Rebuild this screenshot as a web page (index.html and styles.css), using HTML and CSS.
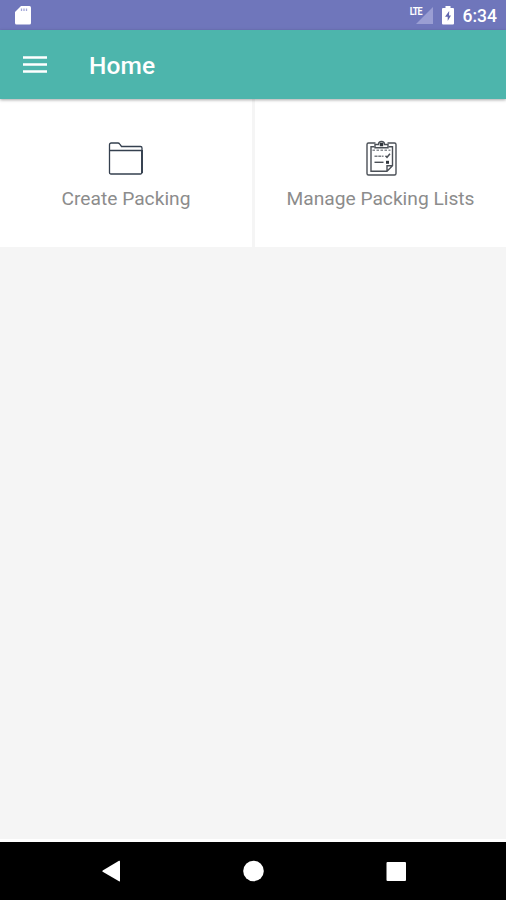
FILE: index.html
```html
<!DOCTYPE html>
<html lang="en">
<head>
<meta charset="utf-8">
<title>Home</title>
<link rel="stylesheet" href="styles.css">
</head>
<body>
<div class="screen">
  <div class="status">
    <svg class="sd" width="16" height="19" viewBox="0 0 16 19"><path d="M6 0h8.500q1.500 0 1.500 1.500v15.500q0 1.500-1.500 1.500h-13q-1.500 0-1.500-1.500v-11z" fill="#fff"/><path d="M6.500 2.500v2.500M9 2.500v2.500M11.500 2.500v2.500" stroke="#a3a7d7" stroke-width="1.300"/></svg>
    <div class="indicators">
      <span class="lte">LTE</span>
      <svg class="signal" width="17" height="17" viewBox="0 0 17 17"><path d="M17 0v17H0z" fill="#9a9ed3"/></svg>
      <svg class="battery" width="12" height="19" viewBox="0 0 12 19"><path d="M3.500 0h5v2H11q1 0 1 1v14.500q0 1-1 1H1q-1 0-1-1V3q0-1 1-1h2.500z" fill="#fff"/><path d="M7.200 5L3 10.700h2.700v4.300L9 9.500H7z" fill="#6268b0"/></svg>
      <span class="clock">6:34</span>
    </div>
  </div>
  <header class="bar">
    <svg class="menu" width="24" height="18" viewBox="0 0 24 18"><path d="M0 1.500h24M0 8.500h24M0 15.500h24" stroke="#fff" stroke-width="2.600"/></svg>
    <h1 class="title">Home</h1>
  </header>
  <main class="content">
    <div class="grid">
      <div class="tile">
        <svg class="icon" width="36" height="38" viewBox="0 0 36 38" fill="none" stroke="#35404f" stroke-width="1.300"><path d="M1.500 32.500V4.800q0-1.800 1.800-1.800h6.500q1.200 0 2 1.200L13.500 6.500h19q1.500 0 1.500 1.500v24.500q0 1.500-1.500 1.500H3q-1.500 0-1.500-1.500zM1.500 10.500h32.500"/><path d="M34 10v23" stroke-width="1.900"/></svg>
        <span class="label">Create Packing</span>
      </div>
      <div class="tile">
        <svg class="icon" width="36" height="38" viewBox="0 0 36 38" fill="none" stroke="#4b5057" stroke-width="1.400"><g transform="translate(.5 .8)"><path d="M12 2.200H5q-1.500 0-1.500 1.500v29q0 1.500 1.500 1.500h26q1.500 0 1.500-1.500v-29q0-1.500-1.500-1.500h-7"/><path d="M11 6H7.500v24.500h16l5.500-5.500V6h-4M23.500 30.500V25H29"/><path d="M11.500 7V3.700H15q0-3 3-3t3 3h3.500V7z"/><path d="M16.300 2h3.400v3.500h-3.400z" fill="#30353c" stroke="none"/><path d="M9 9.500h18" stroke-dasharray="2.500 1.500" stroke="#8a8e93"/><path d="M11 15.500h9" stroke-dasharray="3 .8" stroke="#777b80"/><path d="M11 21.500h9"/><path d="M22 15l1.500 1.500 3-3.500" stroke-width="1.500"/><path d="M22.500 20h3v3h-3z" fill="#30353c" stroke="none"/></g></svg>
        <span class="label">Manage Packing Lists</span>
      </div>
    </div>
  </main>
  <nav class="nav">
    <svg width="506" height="58" viewBox="0 0 506 58" fill="#fff"><path d="M119 18.800q1-.5 1 .5v19.500q0 1-1 .5l-16.300-9.500q-.8-.7 0-1.400z"/><circle cx="253.500" cy="29" r="10.300"/><rect x="386.500" y="20" width="19.500" height="19" rx="1"/></svg>
  </nav>
</div>
</body>
</html>
```
FILE: styles.css
```css
body {
  margin: 0;
  font-family: Roboto, sans-serif;
}

.screen {
  display: flex;
  flex-direction: column;
  width: 506px;
  height: 900px;
  overflow: hidden;
  background: #f5f5f5;
}

.status {
  display: flex;
  flex: none;
  justify-content: space-between;
  box-sizing: border-box;
  height: 30px;
  padding: 6px 9px 0 15px;
  background: #6f76bb;
  color: #fff;
}

.indicators {
  display: flex;
  align-items: flex-start;
}

.lte {
  margin-right: -6px;
  font-size: 9px;
  font-weight: 700;
  line-height: 10px;
  letter-spacing: -0.9px;
  transform: scaleY(1.25);
}

.signal {
  margin: 1px 9px 0 0;
}

.battery {
  margin-right: 9px;
}

.clock {
  font-size: 17.5px;
  font-weight: 500;
  line-height: 20px;
}

.bar {
  display: flex;
  flex: none;
  align-items: center;
  z-index: 1;
  height: 69px;
  padding-left: 23px;
  background: #4db5ac;
  box-shadow: 0 1px 3px rgba(0, 0, 0, 0.35);
}

.title {
  margin: 2px 0 0 42px;
  color: #fff;
  font-size: 24.5px;
  font-weight: 500;
  line-height: 30px;
  letter-spacing: 0.1px;
}

.content {
  flex: 1;
  border-bottom: 3px solid #fff;
}

.grid {
  display: grid;
  grid-template-columns: 252px 251px;
  gap: 3px;
}

.tile {
  display: flex;
  flex-direction: column;
  align-items: center;
  box-sizing: border-box;
  height: 148px;
  padding-top: 41px;
  background: #fff;
}

.label {
  margin-top: 8px;
  color: #8c8c8c;
  font-size: 19.2px;
  line-height: 26px;
  white-space: nowrap;
}

.nav {
  flex: none;
  height: 58px;
  background: #000;
}
```
